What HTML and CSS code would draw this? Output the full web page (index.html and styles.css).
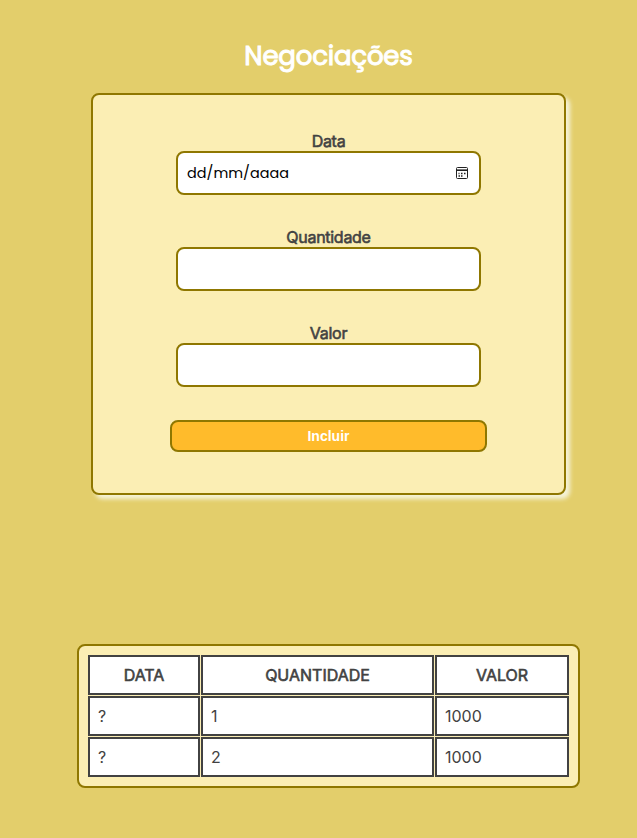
FILE: index.html
```html
<!DOCTYPE html>
<html lang="pt-BR">
<head>
<meta charset="utf-8">
<title>Negociações</title>
<link rel="stylesheet" href="styles.css">
</head>
<body>
<h1>Negociações</h1>
<form class="form">
  <div class="group"><label>Data</label>
    <div class="field"><span>dd/mm/aaaa</span>
      <svg class="calendar" viewBox="0 0 14 14" fill="none" stroke="#222"><rect x="1.5" y="1.5" width="11" height="11" rx="1"/><path d="M2 3.5h10" stroke="#777"/><path d="M1.5 4.5h11"/><path d="M6 7.5h1.5M9 7.5h1.5M3.5 7.5h1M3.5 10h1.5M6 10h1.5" stroke-width="1.5"/></svg>
    </div></div>
  <div class="group"><label for="q">Quantidade</label><input class="field" id="q"></div>
  <div class="group"><label for="v">Valor</label><input class="field" id="v"></div>
  <button type="button">Incluir</button>
</form>
<div class="table-box">
<table>
<thead><tr><th class="c1">DATA</th><th class="c2">QUANTIDADE</th><th class="c3">VALOR</th></tr></thead>
<tbody><tr><td>?</td><td>1</td><td>1000</td></tr><tr><td>?</td><td>2</td><td>1000</td></tr></tbody>
</table>
</div>
</body>
</html>
```
FILE: styles.css
```css
* { box-sizing: border-box; }
body { margin: 0; padding: 36px 0 0 20px; height: 838px; background: #e3ce6b; color: #424242; font-family: Inter, sans-serif; display: flex; flex-direction: column; align-items: center; }
h1 { margin: 0; height: 57px; line-height: 40px; font-family: Poppins, "Open Sans", sans-serif; font-size: 26px; font-weight: 400; letter-spacing: -0.2px; -webkit-text-stroke: 1px #fff; color: #fff; }
.form { width: 475px; height: 402px; padding: 38px 0 0; border: 2px solid #8f7700; border-radius: 8px; background: #fbeeb4; box-shadow: 4px 4px 4px #f5f3d8; display: flex; flex-direction: column; align-items: center; }
.group { width: 305px; height: 96px; display: flex; flex-direction: column; align-items: center; }
label { height: 18px; line-height: 16px; font-size: 16px; font-weight: 400; letter-spacing: -0.28px; -webkit-text-stroke: 0.6px #424242; }
.field { width: 305px; height: 44px; padding: 0 9px; border: 2px solid #8f7700; border-radius: 8px; background: #fff; color: #000; font-family: Poppins, sans-serif; font-size: 14.4px; display: flex; align-items: center; justify-content: space-between; }
.calendar { width: 14px; height: 14px; margin-right: 1px; }
.field span { line-height: 20px; letter-spacing: 0.03px; }
button { width: 317px; height: 32px; margin-top: -1px; border: 2px solid #8f7700; border-radius: 8px; background: #ffbb2b; color: #fff; font: 700 14px "Liberation Sans", sans-serif; }
.table-box { margin-top: 149px; width: 503px; height: 144px; padding: 8px; border: 2px solid #8f7700; border-radius: 8px; background: #fbeeb4; }
table { width: 483px; border-spacing: 1px; table-layout: fixed; }
th, td { height: 40px; padding: 0 8px; border: 2px solid #424242; background: #fff; font-size: 16px; text-align: left; }
th { font-weight: 400; -webkit-text-stroke: 0.6px #424242; text-align: center; }
.c1 { width: 112px; } .c2 { width: 233px; } .c3 { width: 134px; }
```
